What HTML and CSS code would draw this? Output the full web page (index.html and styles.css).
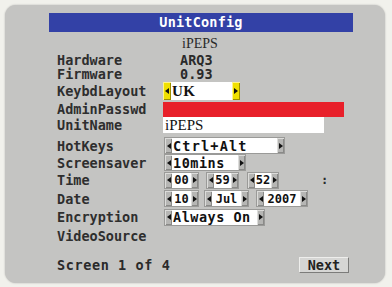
FILE: index.html
```html
<!DOCTYPE html>
<html>
<head>
<meta charset="utf-8">
<link rel="stylesheet" href="styles.css">
</head>
<body>
<div class="panel">
  <div class="titlebar">UnitConfig</div>
  <div class="rows">
    <div class="row r-head"><span class="lbl"></span><span class="head">iPEPS</span></div>
    <div class="row r-15"><span class="lbl">Hardware</span><span class="plain">ARQ3</span></div>
    <div class="row r-14"><span class="lbl">Firmware</span><span class="plain">0.93</span></div>
    <div class="row r-20"><span class="lbl">KeybdLayout</span>
      <span class="field focus"><i class="arr l"></i><span class="txt serif w-kb">UK</span><i class="arr r"></i></span>
    </div>
    <div class="row r-16"><span class="lbl">AdminPasswd</span><span class="redbar"></span></div>
    <div class="row r-16"><span class="lbl">UnitName</span><span class="namebox">iPEPS</span></div>
    <div class="row r-17 gap"><span class="lbl">HotKeys</span>
      <span class="field"><i class="arr l"></i><span class="txt w-hk spaced">Ctrl+Alt</span><i class="arr r"></i></span>
    </div>
    <div class="row r-17"><span class="lbl">Screensaver</span>
      <span class="field"><i class="arr l"></i><span class="txt w-ss">10mins</span><i class="arr r"></i></span>
    </div>
    <div class="row r-18"><span class="lbl">Time</span>
      <span class="field"><i class="arr l"></i><span class="txt num w-19">00</span><i class="arr r"></i></span>
      <span class="field sep9"><i class="arr l"></i><span class="txt num w-17">59</span><i class="arr r"></i></span>
      <span class="field sep10"><i class="arr l"></i><span class="txt num w-15">52</span><i class="arr r"></i></span>
      <span class="colon">:</span>
    </div>
    <div class="row r-19"><span class="lbl">Date</span>
      <span class="field"><i class="arr l"></i><span class="txt num w-19">10</span><i class="arr r"></i></span>
      <span class="field sep7"><i class="arr l"></i><span class="txt num w-29">Jul</span><i class="arr r"></i></span>
      <span class="field sep9"><i class="arr l"></i><span class="txt num w-36">2007</span><i class="arr r"></i></span>
    </div>
    <div class="row r-18"><span class="lbl">Encryption</span>
      <span class="field"><i class="arr l"></i><span class="txt w-enc">Always On</span><i class="arr r"></i></span>
    </div>
    <div class="row r-19"><span class="lbl">VideoSource</span></div>
  </div>
  <div class="footer">
    <span class="screen">Screen 1 of 4</span>
    <span class="next">Next</span>
  </div>
</div>
</body>
</html>
```
FILE: styles.css
```css
html, body {
  margin: 0;
  padding: 0;
}
body {
  background: #f1f1ec;
  width: 392px;
  height: 287px;
  overflow: hidden;
  font-family: "DejaVu Sans Mono", "Liberation Mono", monospace;
  font-weight: bold;
  color: #2a2a2a;
}
.panel {
  margin: 5px;
  width: 380px;
  height: 278px;
  box-sizing: border-box;
  background: #c4c4c2;
  border-radius: 11px;
  padding-top: 8px;
  box-shadow: 0 0 2px rgba(0,0,0,0.25);
}
.titlebar {
  margin-left: 44px;
  width: 304px;
  height: 19px;
  background: #3341a6;
  color: #ffffff;
  font-size: 13.5px;
  line-height: 19px;
  text-align: center;
  letter-spacing: 0.2px;
}
.rows {
  margin-top: 4px;
  margin-left: 52px;
  display: flex;
  flex-direction: column;
}
.row {
  display: flex;
  align-items: center;
  font-size: 13.5px;
}
.r-head { height: 16px; }
.r-14 { height: 14px; }
.r-15 { height: 15px; }
.r-16 { height: 16px; }
.r-17 { height: 17px; }
.r-18 { height: 18px; }
.r-19 { height: 19px; }
.r-20 { height: 20px; }
.gap { margin-top: 4px; }
.lbl {
  width: 106px;
  flex: none;
  white-space: nowrap;
  color: #2e2e2e;
}
.head {
  margin-left: 19px;
  font-family: "Liberation Serif", "DejaVu Serif", serif;
  font-weight: normal;
  font-size: 14px;
}
.plain {
  margin-left: 17px;
  font-weight: bold;
}
.field {
  display: inline-flex;
  height: 15px;
  margin-left: 2px;
  outline: 1px solid #9a9a98;
  background: #b4b4b2;
}
.field.focus {
  height: 18px;
  margin-left: 0;
  outline: none;
}
.sep7 { margin-left: 7px; }
.sep9 { margin-left: 9px; }
.sep10 { margin-left: 10px; }
.arr {
  width: 7px;
  flex: none;
  display: flex;
  align-items: center;
  justify-content: center;
  background: #b6b6b4;
  box-shadow: inset 1px 1px 0 #dcdcda, inset -1px -1px 0 #8a8a88;
}
.focus .arr {
  width: 8px;
  background: #f0e000;
  box-shadow: inset 1px 1px 0 #fff58a, inset -1px -1px 0 #9c8f00;
}
.arr::before {
  content: "";
  width: 0;
  height: 0;
  border-top: 3px solid transparent;
  border-bottom: 3px solid transparent;
}
.arr.l::before { border-right: 4px solid #111; }
.arr.r::before { border-left: 4px solid #111; }
.txt {
  background: #ffffff;
  color: #111;
  display: flex;
  align-items: center;
  padding-left: 1px;
  font-size: 13.5px;
  white-space: nowrap;
  overflow: hidden;
  letter-spacing: 0.5px;
}
.txt.num {
  justify-content: center;
  padding-left: 0;
  letter-spacing: 0;
  font-size: 12px;
}
.serif {
  font-family: "Liberation Serif", "DejaVu Serif", serif;
  font-weight: bold;
  font-size: 15px;
}
.spaced { letter-spacing: 1.2px; }
.w-kb { width: 60px; }
.w-hk { width: 104px; }
.w-ss { width: 65px; }
.w-19 { width: 19px; }
.w-17 { width: 17px; }
.w-15 { width: 16px; }
.w-29 { width: 29px; }
.w-36 { width: 36px; }
.w-enc { width: 84px; }
.redbar {
  width: 181px;
  height: 15px;
  align-self: flex-end;
  background: #e8202a;
}
.namebox {
  width: 161px;
  height: 16px;
  background: #ffffff;
  color: #111;
  font-family: "Liberation Serif", "DejaVu Serif", serif;
  font-weight: normal;
  font-size: 15px;
  line-height: 16px;
  padding-left: 2px;
  box-sizing: border-box;
}
.colon {
  margin-left: 43px;
  font-size: 12px;
}
.footer {
  margin-top: 12px;
  margin-left: 52px;
  width: 292px;
  height: 16px;
  display: flex;
  align-items: center;
  justify-content: space-between;
  font-size: 13.5px;
}
.screen {
  letter-spacing: 0.6px;
}
.next {
  width: 50px;
  height: 16px;
  box-sizing: border-box;
  background: #d6d6d4;
  border: 1px solid;
  border-color: #eeeeec #7c7c7a #7c7c7a #eeeeec;
  color: #222;
  text-align: center;
  line-height: 14px;
}
```
